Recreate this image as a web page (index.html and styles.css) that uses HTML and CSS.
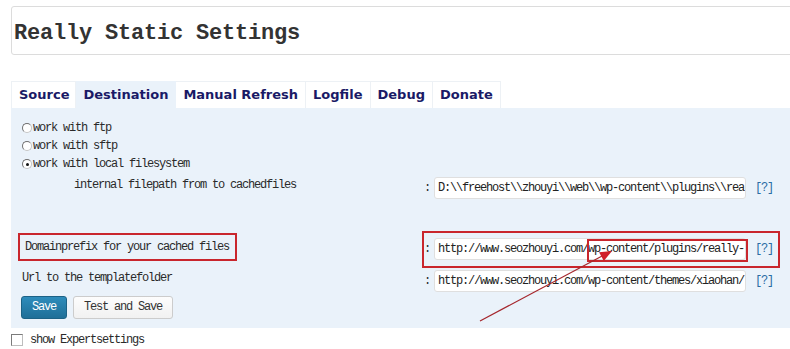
FILE: index.html
```html
<!DOCTYPE html>
<html>
<head>
<meta charset="utf-8">
<link rel="stylesheet" href="styles.css">
</head>
<body>
<div class="page">
  <div class="title-box"><h2 class="title">Really Static Settings</h2></div>
  <ul class="tabs">
    <li class="tab">Source</li>
    <li class="tab active">Destination</li>
    <li class="tab">Manual Refresh</li>
    <li class="tab">Logfile</li>
    <li class="tab">Debug</li>
    <li class="tab">Donate</li>
  </ul>
  <div class="panel">
    <div class="radio-row"><span class="radio"></span>work with ftp</div>
    <div class="radio-row"><span class="radio"></span>work with sftp</div>
    <div class="radio-row"><span class="radio checked"></span>work with local filesystem</div>
    <div class="field field-internal">
      <span class="label indent">internal filepath from to cachedfiles</span>
      <span class="control"><span class="colon">:</span><span class="input">D:\\freehost\\zhouyi\\web\\wp-content\\plugins\\rea</span><span class="help">[?]</span></span>
    </div>
    <div class="field field-domain">
      <span class="label boxed">Domainprefix for your cached files</span>
      <span class="control"><span class="colon">:</span><span class="input">http://www.seozhouyi.com/wp-content/plugins/really-</span><span class="help">[?]</span></span>
    </div>
    <div class="field field-url">
      <span class="label">Url to the templatefolder</span>
      <span class="control"><span class="colon">:</span><span class="input">http://www.seozhouyi.com/wp-content/themes/xiaohan/</span><span class="help">[?]</span></span>
    </div>
    <div class="buttons">
      <span class="btn btn-primary">Save</span>
      <span class="btn">Test and Save</span>
    </div>
    <div class="hl-box"></div>
    <div class="hl-inner"></div>
  </div>
  <div class="expert"><span class="checkbox"></span>show Expertsettings</div>
  <svg class="arrow" width="790" height="349" viewBox="0 0 790 349">
    <line x1="480" y1="321" x2="604" y2="255" stroke="#a5262c" stroke-width="1.2"/>
    <polygon points="612,251 603.8,261 599.1,252.2" fill="#d0202a"/>
  </svg>
</div>
</body>
</html>
```
FILE: styles.css
```css
html, body {
  margin: 0;
  padding: 0;
  background: #fff;
}
.page {
  position: relative;
  width: 790px;
  height: 349px;
  overflow: hidden;
  font-family: "Liberation Mono", "DejaVu Sans Mono", monospace;
  font-size: 12px;
  letter-spacing: -1.2px;
  color: #2a2a2a;
}
.title-box {
  margin: 6px -4px 0 11px;
  height: 47px;
  border: 1px solid #dcdcdc;
  border-radius: 3px;
  background: #fff;
}
.title {
  margin: 0;
  padding: 14px 0 0 2px;
  font-family: "Liberation Mono", monospace;
  font-weight: bold;
  font-size: 22px;
  line-height: 26px;
  letter-spacing: -0.2px;
  color: #333;
}
.tabs {
  list-style: none;
  margin: 26px 0 0 11px;
  padding: 0;
  display: flex;
  height: 27px;
}
.tab {
  box-sizing: border-box;
  height: 27px;
  padding: 5px 7px 0 7px;
  font-family: "DejaVu Sans", Verdana, sans-serif;
  font-weight: bold;
  font-size: 13px;
  letter-spacing: 0;
  line-height: 16px;
  color: #1a1a66;
  background: #fff;
  border: 1px solid #edf1f5;
  border-bottom: none;
  border-left: none;
}
.tab:first-child {
  border-left: 1px solid #edf1f5;
  padding: 5px 6px 0 7px;
}
.tab.active {
  background: #eaf2fa;
  border-color: #eaf2fa;
}
.panel {
  position: relative;
  margin-left: 11px;
  background: #eaf2fa;
  padding: 11px 17px 10px 11px;
  height: 199px;
}
.radio-row {
  display: flex;
  align-items: center;
  height: 18px;
}
.radio {
  box-sizing: border-box;
  width: 10px;
  height: 10px;
  margin-right: 1px;
  border-radius: 50%;
  border: 1px solid #6f6f6f;
  border-right-color: #c4c4c4;
  border-bottom-color: #c4c4c4;
  background: #fff;
  position: relative;
}
.radio.checked::after {
  content: "";
  position: absolute;
  left: 2.5px;
  top: 2.5px;
  width: 3px;
  height: 3px;
  border-radius: 50%;
  background: #111;
}
.field {
  display: flex;
  justify-content: space-between;
  align-items: center;
  height: 22px;
}
.field-internal { margin-top: 4px; }
.field-domain { margin-top: 39px; }
.field-url { margin-top: 10px; }
.label {
  align-self: flex-start;
  line-height: 16px;
}
.label.indent {
  padding-left: 52px;
}
.label.boxed {
  margin: -5px 0 0 -4px;
  padding: 0 6px 0 5px;
  line-height: 24px;
  border: 2px solid #c9262d;
}
.control {
  display: flex;
  align-items: center;
}
.colon {
  margin-right: 4px;
}
.input {
  box-sizing: border-box;
  display: block;
  width: 312px;
  height: 22px;
  line-height: 20px;
  padding: 0 3px;
  white-space: nowrap;
  overflow: hidden;
  background: #fff;
  border: 1px solid #dfdfdf;
  border-radius: 3px;
  color: #222;
}
.help {
  margin-left: 9px;
  color: #2a6ca4;
}
.buttons {
  display: flex;
  gap: 6px;
  margin: 4px 0 0 -1px;
}
.btn {
  box-sizing: border-box;
  height: 23px;
  line-height: 21px;
  padding: 0 10px 0 10px;
  border: 1px solid #ccc;
  border-radius: 3px;
  background: linear-gradient(#fdfdfd, #f1f1f1);
  color: #333;
}
.btn-primary {
  width: 46px;
  text-align: center;
  padding: 0;
  color: #fff;
  background: linear-gradient(#2e8cbb, #1f6f98);
  border-color: #1c6286;
}
.hl-box {
  position: absolute;
  left: 411px;
  top: 123px;
  width: 354px;
  height: 33px;
  border: 2px solid #c9262d;
}
.hl-inner {
  position: absolute;
  left: 576px;
  top: 131px;
  width: 157px;
  height: 19px;
  border: 2px solid #c9262d;
}
.expert {
  display: flex;
  align-items: center;
  margin: 6px 0 0 11px;
  height: 12px;
}
.checkbox {
  box-sizing: border-box;
  width: 12px;
  height: 12px;
  margin-right: 7px;
  border: 1px solid #7b7b7b;
  border-right-color: #bdbdbd;
  border-bottom-color: #bdbdbd;
  background: #fff;
}
.arrow {
  position: absolute;
  left: 0;
  top: 0;
  pointer-events: none;
}
```
